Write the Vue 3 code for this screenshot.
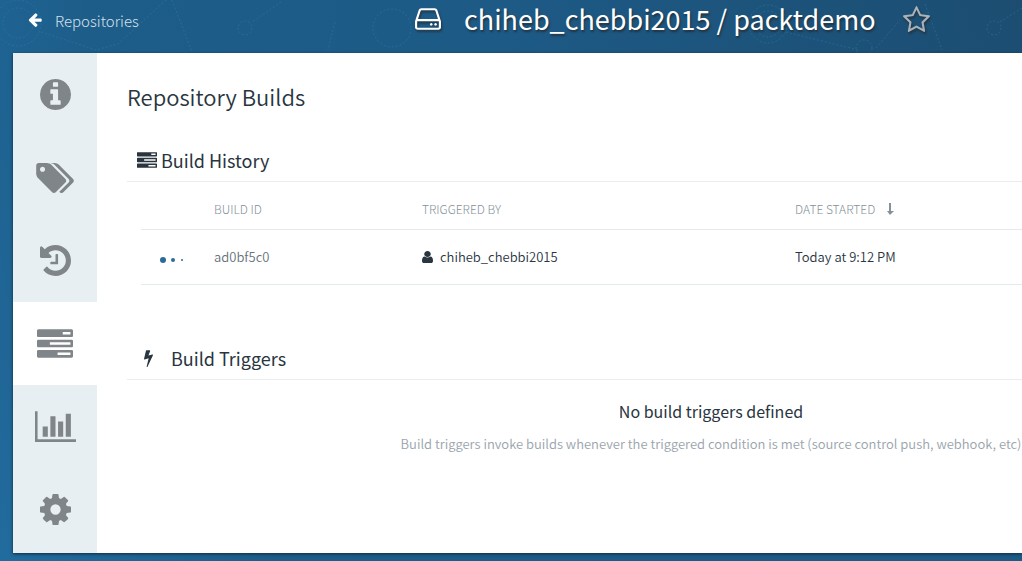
<script setup>
const navItems = [
  {
    label: 'Information', href: '#info', box: '128 128 1536 1536', size: 'medium',
    path: 'M1664 896q0 209-103 385.5t-279.5 279.5-385.5 103-385.5-103-279.5-279.5-103-385.5 103-385.5 279.5-279.5 385.5-103 385.5 103 279.5 279.5 103 385.5zM1152 1376v-160q0-14-9-23t-23-9h-96v-512q0-14-9-23t-23-9h-320q-14 0-23 9t-9 23v160q0 14 9 23t23 9h96v320h-96q-14 0-23 9t-9 23v160q0 14 9 23t23 9h448q14 0 23-9t9-23zM1024 480v-160q0-14-9-23t-23-9h-192q-14 0-23 9t-9 23v160q0 14 9 23t23 9h192q14 0 23-9t9-23z'
  },
  {
    label: 'Tags', href: '#tags', box: '0 128 1899 1515', size: 'large',
    path: 'M448 448q0-53-37.5-90.5t-90.5-37.5-90.5 37.5-37.5 90.5 37.5 90.5 90.5 37.5 90.5-37.5 37.5-90.5zm1067 576q0 53-37 90l-491 492q-39 37-91 37-53 0-90-37l-715-716q-38-37-64.5-101t-26.5-117v-416q0-52 38-90t90-38h416q53 0 117 26.5t102 64.5l715 714q37 39 37 91zm384 0q0 53-37 90l-491 492q-39 37-91 37-36 0-59-14t-53-45l470-470q37-37 37-90 0-52-37-91l-715-714q-38-38-102-64.5t-117-26.5h224q53 0 117 26.5t102 64.5l715 714q37 39 37 91z'
  },
  {
    label: 'Tag History', href: '#history', box: '128 128 1536 1536', size: 'medium',
    path: 'M1664 896q0 156-61 298t-164 245-245 164-298 61q-172 0-327-72.5t-264-204.5q-7-10-6.5-22.5t8.5-20.5l137-138q10-9 25-9 16 2 23 12 73 95 179 147t225 52q104 0 198.5-40.5t163.5-109.5 109.5-163.5 40.5-198.5-40.5-198.5-109.5-163.5-163.5-109.5-198.5-40.5q-98 0-188 35.5t-160 101.5l137 138q31 30 14 69-17 40-59 40h-448q-26 0-45-19t-19-45v-448q0-42 40-59 39-17 69 14l130 129q107-101 244.5-156.5t284.5-55.5q156 0 298 61t245 164 164 245 61 298zm-640-288v448q0 14-9 23t-23 9h-320q-14 0-23-9t-9-23v-64q0-14 9-23t23-9h224v-352q0-14 9-23t23-9h64q14 0 23 9t9 23z'
  },
  {
    label: 'Builds', href: '#builds', box: '0 128 1792 1408', size: 'wide', active: true,
    path: 'M1024 1408h640v-128h-640v128zm-384-512h1024v-128h-1024v128zm640-512h384v-128h-384v128zm512 832v256q0 26-19 45t-45 19h-1664q-26 0-45-19t-19-45v-256q0-26 19-45t45-19h1664q26 0 45 19t19 45zm0-512v256q0 26-19 45t-45 19h-1664q-26 0-45-19t-19-45v-256q0-26 19-45t45-19h1664q26 0 45 19t19 45zm0-512v256q0 26-19 45t-45 19h-1664q-26 0-45-19t-19-45v-256q0-26 19-45t45-19h1664q26 0 45 19t19 45z'
  },
  {
    label: 'Usage Logs', href: '#logs', box: '0 128 2048 1536', size: 'xlarge',
    path: 'M640 896v512h-256v-512h256zm384-512v1024h-256v-1024h256zm1024 1152v128h-2048v-1536h128v1408h1920zm-640-896v768h-256v-768h256zm384-384v1152h-256v-1152h256z'
  },
  {
    label: 'Settings', href: '#settings', box: '128 128 1536 1536', size: 'medium',
    path: 'M1152 896q0-106-75-181t-181-75-181 75-75 181 75 181 181 75 181-75 75-181zm512-109v222q0 12-8 23t-20 13l-185 28q-19 54-39 91 35 50 107 138 10 12 10 25t-9 23q-27 37-99 108t-94 71q-12 0-26-9l-138-108q-44 23-91 38-16 136-29 186-7 28-36 28h-222q-14 0-24.5-8.5t-11.5-21.5l-28-184q-49-16-90-37l-141 107q-10 9-25 9-14 0-25-11-126-114-165-168-7-10-7-23 0-12 8-23 15-21 51-66.5t54-70.5q-27-50-41-99l-183-27q-13-2-21-12.5t-8-23.5v-222q0-12 8-23t19-13l186-28q14-46 39-92-40-57-107-138-10-12-10-24 0-10 9-23 26-36 98.5-107.5t94.5-71.5q13 0 26 10l138 107q44-23 91-38 16-136 29-186 7-28 36-28h222q14 0 24.5 8.5t11.5 21.5l28 184q49 16 90 37l142-107q9-9 24-9 13 0 25 10 129 119 165 170 7 8 7 22 0 12-8 23-15 21-51 66.5t-54 70.5q26 50 41 98l183 28q13 2 21 12.5t8 23.5z'
  }
]
const tasksIcon = navItems[3]
const builds = [{ id: 'ad0bf5c0', user: 'chiheb_chebbi2015', started: 'Today at 9:12 PM' }]
</script>

<template>
  <div class="page">
    <svg class="backdrop" width="1022" height="561" aria-hidden="true">
      <g fill="none" stroke="#2f86bb" stroke-dasharray="2 2">
        <circle cx="18" cy="23" r="23" /><circle cx="18" cy="23" r="15" />
        <path d="M41 32L96 50L118 44L166 0M172 0L182 26L192 52M281 2L252 22M335 22L328 50" />
        <circle cx="245" cy="28" r="7" /><circle cx="392" cy="28" r="19" />
        <circle cx="768" cy="24" r="19" /><circle cx="768" cy="24" r="13" />
        <path d="M786 32L858 50M876 48L900 20M925 4L942 50M1000 22L1022 8" />
        <circle cx="994" cy="28" r="7" /><circle cx="864" cy="48" r="8" />
      </g>
    </svg>
    <header class="header">
      <a class="back" href="#repositories">
        <svg class="back-icon" viewBox="128 140 1536 1612" aria-hidden="true"><path d="M1664 896v128q0 53-32.500 90.500t-84.500 37.500h-704l293 294q38 36 38 90t-38 90l-75 76q-37 37-90 37-52 0-91-37l-651-652q-37-37-37-90 0-52 37-91l651-650q38-38 91-38 52 0 90 38l75 74q38 38 38 91t-38 91l-293 293h704q52 0 84.500 37.500t32.500 90.500z" /></svg>
        <span>Repositories</span>
      </a>
      <h1 class="title">
        <svg class="repo-icon" viewBox="128 256 1536 1280" aria-hidden="true"><path d="M1168 1216q0 33-23.5 56.5t-56.5 23.5-56.5-23.5-23.5-56.5 23.5-56.5 56.5-23.5 56.5 23.5 23.5 56.5zm256 0q0 33-23.5 56.5t-56.5 23.5-56.5-23.5-23.5-56.5 23.5-56.5 56.5-23.5 56.5 23.5 23.5 56.5zm112 160v-320q0-13-9.5-22.5t-22.5-9.5h-1216q-13 0-22.5 9.5t-9.5 22.5v320q0 13 9.5 22.5t22.5 9.5h1216q13 0 22.5-9.500t9.500-22.500zm-1230-480h1180l-157-482q-4-13-16-21.500t-26-8.500h-782q-14 0-26 8.500t-16 21.500zm1358 160v320q0 66-47 113t-113 47h-1216q-66 0-113-47t-47-113v-320q0-25 16-75l197-606q17-53 63-86t101-33h782q55 0 101 33t63 86l197 606q16 50 16 75z" /></svg>
        <span>chiheb_chebbi2015 / packtdemo</span>
      </h1>
      <button class="star" type="button" aria-label="Star repository">
        <svg viewBox="64 32 1664 1587" aria-hidden="true"><path d="M1201 1004l306-297-422-62-189-382-189 382-422 62 306 297-73 421 378-199 377 199zm527-357q0 22-26 48l-363 354 86 500q1 7 1 20 0 50-41 50-19 0-40-12l-449-236-449 236q-22 12-40 12-21 0-31.500-14.500t-10.500-35.500q0-6 2-20l86-500-364-354q-25-27-25-48 0-37 56-46l502-73 225-455q19-41 49-41t49 41l225 455 502 73q56 9 56 46z" /></svg>
      </button>
    </header>

    <div class="panel">
      <nav class="nav">
        <a v-for="item in navItems" :key="item.href" :href="item.href" :aria-label="item.label" :class="{ active: item.active }">
          <svg :class="item.size" :viewBox="item.box" aria-hidden="true"><path fill-rule="evenodd" :d="item.path" /></svg>
        </a>
      </nav>
      <main class="content">
        <h2>Repository Builds</h2>

        <section class="history">
          <h3><svg class="tasks" :viewBox="tasksIcon.box" aria-hidden="true"><path :d="tasksIcon.path" /></svg>Build History</h3>
          <table>
            <thead>
              <tr>
                <th class="col-status"></th>
                <th class="col-id">BUILD ID</th>
                <th class="col-user">TRIGGERED BY</th>
                <th>DATE STARTED<svg class="sort" viewBox="0 0 7 12" aria-hidden="true"><path d="M2 0h2v8h3L3 12L0 8h2z" /></svg></th>
              </tr>
            </thead>
            <tbody>
              <tr v-for="build in builds" :key="build.id">
                <td><span class="dots" role="img" aria-label="Building"><i></i><i></i><i></i></span></td>
                <td><a href="#build">{{ build.id }}</a></td>
                <td><svg class="user" viewBox="256 128 1280 1536" preserveAspectRatio="none" aria-hidden="true"><path d="M1536 1399q0 109-62.500 187t-150.500 78h-854q-88 0-150.500-78t-62.500-187q0-85 8.500-160.500t31.500-152 58.500-131 94-89 134.500-34.500q131 128 313 128t313-128q76 0 134.500 34.500t94 89 58.500 131 31.500 152 8.500 160.500zm-256-887q0 159-112.500 271.500t-271.500 112.500-271.500-112.500-112.500-271.500 112.500-271.500 271.500-112.500 271.500 112.500 112.500 271.500z" /></svg>{{ build.user }}</td>
                <td>{{ build.started }}</td>
              </tr>
            </tbody>
          </table>
        </section>

        <section class="triggers">
          <h3><svg class="bolt" viewBox="448 0 896 1792" aria-hidden="true"><path d="M1333 566q18 20 7 44l-540 1157q-13 25-42 25-4 0-14-2-17-5-25.500-19t-4.500-30l197-808-406 101q-4 1-12 1-18 0-31-11-18-15-13-39l201-825q4-14 16-23t28-9h328q19 0 32 12.500t13 29.500q0 8-5 18l-171 463 396-98q8-2 12-2 19 0 34 15z" /></svg>Build Triggers</h3>
          <div class="empty">
            <p class="empty-title">No build triggers defined</p>
            <p class="empty-text">Build triggers invoke builds whenever the triggered condition is met (source control push, webhook, etc)</p>
          </div>
        </section>
      </main>
    </div>
  </div>
</template>

<style>
body {
  margin: 0;
}
</style>

<style scoped>
* {
  box-sizing: border-box;
}

svg {
  fill: currentColor;
  flex: none;
}

a {
  color: inherit;
  text-decoration: none;
}

h1, h2, h3, p {
  margin: 0;
  font-weight: 400;
}

.page {
  position: relative;
  display: flex;
  flex-direction: column;
  min-height: 100vh;
  padding: 0 0 8px 13px;
  overflow: hidden;
  color: #29353f;
  background: radial-gradient(circle at 100% 0, #1c4d71 0, #1d5a86 45%, #1d5d8a 80%, #216c9e 100%);
  font-family: "Noto Sans CJK SC", "Noto Sans", sans-serif;
  font-size: 13px;
}

.backdrop {
  position: absolute;
  top: 0;
  left: 0;
  opacity: 0.4;
}

.header {
  position: relative;
  display: flex;
  align-items: center;
  height: 53px;
  padding-bottom: 15px;
  color: #fff;
}

.back {
  display: flex;
  align-items: center;
  gap: 13px;
  width: 402px;
  padding: 2px 0 0 15px;
  color: #d5e0e8;
  font-size: 15px;
  font-weight: 300;
}

.back-icon {
  width: 14px;
  height: 14px;
  color: #fff;
}

.title {
  display: flex;
  align-items: center;
  gap: 23px;
  font-size: 27px;
  line-height: 38px;
  white-space: nowrap;
  text-shadow: 1px 2px 2px #22323f;
}

.repo-icon {
  width: 26px;
  height: 22px;
  filter: drop-shadow(1px 2px 1px #22323f);
}

.star {
  display: flex;
  margin-left: 27px;
  padding: 0;
  border: 0;
  color: #aab2b8;
  background: none;
  filter: drop-shadow(1px 2px 1px #22323f);
}

.star svg {
  width: 27px;
  height: 26px;
}

.panel {
  position: relative;
  display: flex;
  flex: 1;
  background: #fff;
  box-shadow: 0 1px 3px #12293a;
}

.nav {
  display: grid;
  flex: none;
  grid-auto-rows: 83px;
  align-content: start;
  width: 84px;
  background: #e8eff3;
}

.nav a {
  display: flex;
  align-items: center;
  justify-content: center;
  color: #7f8588;
}

.nav a.active {
  background: #fff;
}

.medium { width: 31px; height: 31px; }
.large { width: 38px; height: 30px; }
.wide { width: 36px; height: 29px; }
.xlarge { width: 41px; height: 31px; }

.content {
  flex: 1;
  min-width: 0;
  padding: 26px 0 0 30px;
}

h2 {
  font-size: 22px;
  font-weight: 350;
  line-height: 34px;
}

h3 {
  display: flex;
  align-items: center;
  height: 40px;
  padding-bottom: 3px;
  border-bottom: 1px solid #e8edf0;
  font-size: 18px;
}

.history {
  margin-top: 29px;
}

.history h3 {
  gap: 4px;
  padding-left: 10px;
}

.tasks {
  width: 20px;
  height: 16px;
}

table {
  width: calc(100% - 14px);
  margin-left: 14px;
  border-collapse: collapse;
  table-layout: fixed;
}

th, td {
  padding: 0;
  border-bottom: 1px solid #e4ebef;
  text-align: left;
  white-space: nowrap;
}

th {
  height: 47px;
  padding-top: 6px;
  color: #84919a;
  font-size: 12px;
  font-weight: 300;
}

td {
  height: 55px;
  font-weight: 350;
}

td a {
  color: #66737c;
}

.col-status { width: 73px; }
.col-id { width: 208px; }
.col-user { width: 373px; }

.sort {
  width: 7px;
  height: 12px;
  margin-left: 12px;
  vertical-align: -1px;
}

.dots {
  display: flex;
  align-items: center;
  gap: 5px;
  padding: 6px 0 0 19px;
}

.dots i {
  width: 6px;
  height: 6px;
  border-radius: 50%;
  background: #2d6b97;
}

.dots i:nth-child(2) {
  width: 4px;
  height: 4px;
}

.dots i:nth-child(3) {
  width: 2px;
  height: 2px;
  margin-left: 1px;
}

.user {
  width: 11px;
  height: 12px;
  margin-right: 7px;
  vertical-align: -1px;
}

.triggers {
  margin-top: 55px;
}

.triggers h3 {
  gap: 17px;
  padding-left: 16px;
}

.bolt {
  width: 11px;
  height: 18px;
}

.empty {
  padding: 18px 0 0 273px;
  text-align: center;
  white-space: nowrap;
}

.empty-title {
  font-size: 16px;
  line-height: 26px;
}

.empty-text {
  margin-top: 10px;
  color: #99a4ac;
  font-weight: 350;
  line-height: 20px;
}
</style>
